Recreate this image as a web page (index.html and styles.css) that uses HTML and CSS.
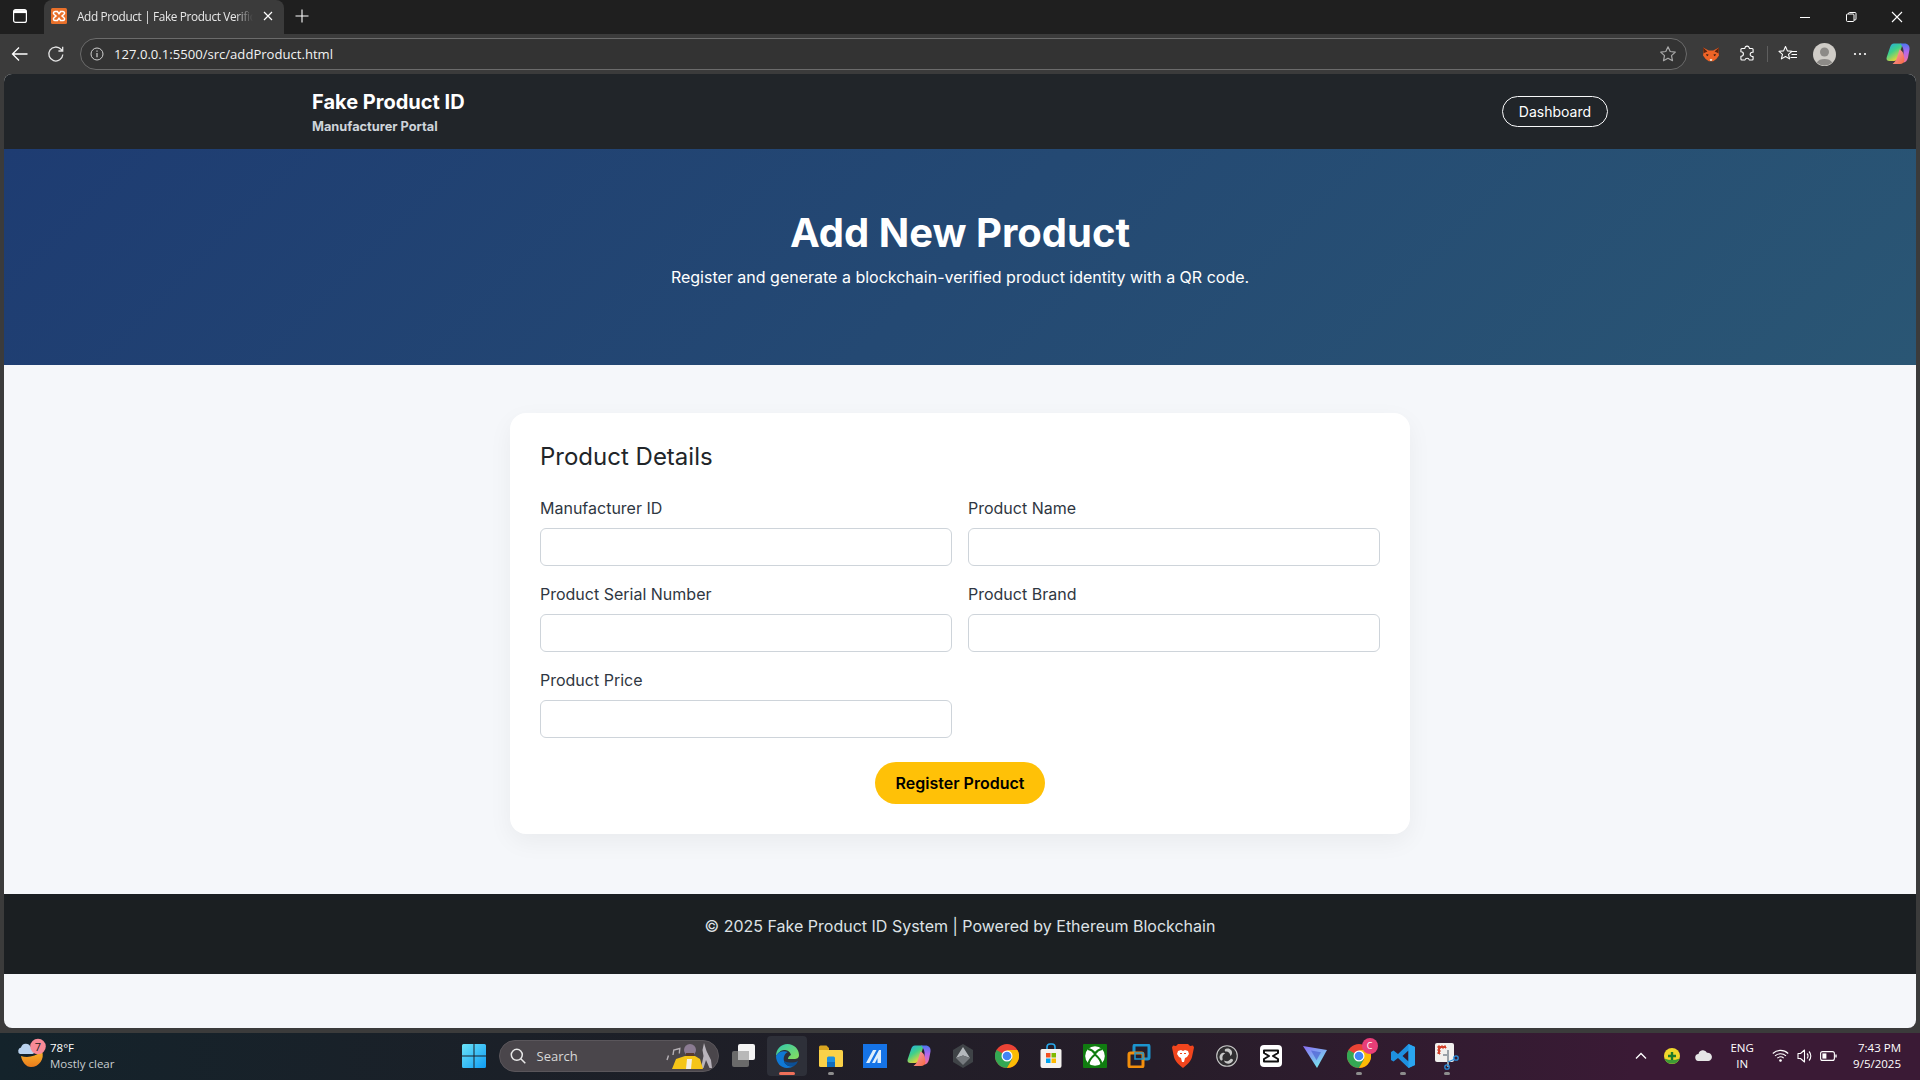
FILE: index.html
```html
<!DOCTYPE html>
<html lang="en">
<head>
    <meta charset="UTF-8">
    <meta name="viewport" content="width=device-width, initial-scale=1.0">
    <title>Add Product | Fake Product Verification</title>
    <link rel="stylesheet" href="styles.css">
</head>
<body>
    <!-- Browser tab strip -->
    <div class="tabstrip">
        <div class="strip-btn">
            <svg width="16" height="16" viewBox="0 0 16 16" fill="none" stroke="#fff" stroke-width="1.2"><rect x="1.6" y="1.6" width="12.8" height="12.8" rx="2"/><path d="M2 3.6h12" stroke-width="3"/></svg>
        </div>
        <div class="tab">
            <svg width="16" height="16" viewBox="0 0 16 16"><rect width="16" height="16" rx="1.5" fill="#e9702a"/><path d="M4 3.5h2.4L8 5.8l1.6-2.3H12a1.6 1.6 0 0 1 1 2.8L11 8l2 1.7a1.6 1.6 0 0 1-1 2.8H9.6L8 10.2 6.4 12.5H4a1.6 1.6 0 0 1-1-2.8L5 8 3 6.3a1.6 1.6 0 0 1 1-2.8z" fill="none" stroke="#fff" stroke-width="1.5"/></svg>
            <span class="tab-title">Add Product | Fake Product Verific</span>
            <svg class="tab-close" width="10" height="10" viewBox="0 0 10 10" stroke="#fff" stroke-width="1.2"><path d="M1 1l8 8M9 1l-8 8"/></svg>
        </div>
        <div class="strip-btn new-tab">
            <svg width="14" height="14" viewBox="0 0 14 14" stroke="#fff" stroke-width="1.1"><path d="M7 .5v13M.5 7h13"/></svg>
        </div>
        <div class="win-controls">
            <div class="win-btn"><svg width="12" height="12" viewBox="0 0 12 12" stroke="#fff"><path d="M1 6.5h10"/></svg></div>
            <div class="win-btn"><svg width="12" height="12" viewBox="0 0 12 12" fill="none" stroke="#fff"><rect x="1.5" y="3" width="7.5" height="7.5" rx="1"/><path d="M3.5 3v-.5a1 1 0 0 1 1-1H10a1 1 0 0 1 1 1V8a1 1 0 0 1-1 1H9"/></svg></div>
            <div class="win-btn"><svg width="12" height="12" viewBox="0 0 12 12" stroke="#fff" stroke-width="1.1"><path d="M1 1l10 10M11 1L1 11"/></svg></div>
        </div>
    </div>

    <!-- Browser toolbar -->
    <div class="toolbar">
        <div class="tool-btn first">
            <svg width="18" height="18" viewBox="0 0 18 18" fill="none" stroke="#fff" stroke-width="1.3"><path d="M16.5 9h-15M8 2.500L1.500 9 8 15.500"/></svg>
        </div>
        <div class="tool-btn">
            <svg width="18" height="18" viewBox="0 0 18 18" fill="none" stroke="#e6e6e6" stroke-width="1.3"><path d="M15.800 9.500a7 7 0 1 1-1.800-5.200L15.700 6M15.700 1.700V6h-4.300"/></svg>
        </div>
        <div class="address">
            <svg width="14" height="14" viewBox="0 0 14 14" fill="none" stroke="#d0d0d0"><circle cx="7" cy="7" r="6"/><path d="M7 6v4.200M7 3.600v1.200" stroke-width="1.2"/></svg>
            <span class="url">127.0.0.1:5500/src/addProduct.html</span>
            <svg class="star" width="18" height="18" viewBox="0 0 18 18" fill="none" stroke="#a8a8a8" stroke-width="1.2" stroke-linejoin="round"><path d="M9 1.800l2.200 4.700 5.100.6-3.800 3.500 1 5.100L9 13.200l-4.500 2.500 1-5.100-3.800-3.500 5.100-.6z"/></svg>
        </div>
        <div class="tool-group">
            <div class="tool-btn">
                <svg width="16" height="15" viewBox="0 0 18 16"><path d="M0 0l6.500 3.500h5L18 0l-.5 6 .5 3-3 4-3.500 2.500h-5L3 13 0 9l.5-3z" fill="#ee6326"/><path d="M0 0l5 4.500L.7 6.500zM18 0l-5 4.500 4.300 2z" fill="#5c2410"/><path d="M3.500 7.500l3 .8-2 1.800zM14.500 7.500l-3 .8 2 1.800z" fill="#2a1a12"/><path d="M7.500 13h3l-.7 2.300H8.200z" fill="#eadccf"/></svg>
            </div>
            <div class="tool-btn">
                <svg width="18" height="18" viewBox="0 0 18 18" fill="none" stroke="#fff" stroke-width="1.1" stroke-linejoin="round"><path d="M6.800 3.200a2.300 2.300 0 0 1 4.500-.4l.2.700h2.600a1 1 0 0 1 1 1v2.700h-.7a2.200 2.200 0 0 0 0 4.400h.7v2.400a1 1 0 0 1-1 1h-2.800a2.200 2.200 0 0 0-4.300 0H3.900a1 1 0 0 1-1-1v-2.800h.3a2.200 2.200 0 0 0 0-4.400h-.3V4.500a1 1 0 0 1 1-1h2.900z"/></svg>
            </div>
            <div class="tool-sep"></div>
            <div class="tool-btn">
                <svg width="20" height="18" viewBox="0 0 20 18" fill="none" stroke="#fff" stroke-width="1.1" stroke-linejoin="round"><path d="M7.500 1.500l1.900 4.400 4.600.4-3.500 3 1.100 4.600L7.500 11.500l-4.100 2.400 1.100-4.600-3.500-3 4.600-.4zM13 6.500h6M13.500 9.500h5.500M12.500 12.500h6.500"/></svg>
            </div>
            <div class="tool-btn">
                <svg width="23" height="23" viewBox="0 0 23 23"><circle cx="11.500" cy="11.500" r="11.500" fill="#cfccc7"/><circle cx="11.500" cy="9" r="4.500" fill="#8c8a87"/><path d="M3.800 19.500a8.500 6 0 0 1 15.400 0 11.500 11.500 0 0 1-15.400 0z" fill="#8c8a87"/></svg>
            </div>
            <div class="tool-btn">
                <svg width="14" height="4" viewBox="0 0 14 4" fill="#fff"><circle cx="2" cy="2" r="1.1"/><circle cx="7" cy="2" r="1.1"/><circle cx="12" cy="2" r="1.1"/></svg>
            </div>
            <div class="tool-btn last">
                <svg width="24" height="22" viewBox="0 0 24 22"><defs><linearGradient id="cpA" x1="0" y1="0" x2=".6" y2="1"><stop offset="0" stop-color="#22a8ee"/><stop offset=".5" stop-color="#3fd08a"/><stop offset="1" stop-color="#f7d52f"/></linearGradient><linearGradient id="cpB" x1=".5" y1="0" x2=".5" y2="1"><stop offset="0" stop-color="#4a78f2"/><stop offset=".45" stop-color="#b368ee"/><stop offset="1" stop-color="#f56f9a"/></linearGradient><linearGradient id="cpC" x1="0" y1="0" x2="1" y2="1"><stop offset="0" stop-color="#f3a0c0"/><stop offset="1" stop-color="#f86a3c"/></linearGradient></defs><path d="M8 .5h6.500c1.500 0 2 1 1.500 2.500L12 15c-.7 2-2 3-4 3H3.500C1 18 0 16.500.7 14.300L4 4.500C4.800 2 6 .5 8 .5z" fill="url(#cpA)"/><path d="M14 .5h4.500c3.500 0 5.500 2.500 5 6l-1.500 8c-.6 3-2.500 5-5 5h-4c3-2 4-6 4.500-9C18 7 17 3 14 .5z" fill="url(#cpB)"/><path d="M13.500 6.500l-2.800 9c-.7 2.300-2.300 4-4.200 5.500H14c2.500 0 4-1.500 4.500-4l-1-6c-.5-2-2-4-4-4.500z" fill="url(#cpC)"/></svg>
            </div>
        </div>
    </div>

    <!-- Page in the browser -->
    <div class="viewport">
        <nav class="topnav">
            <div class="nav-inner">
                <div class="brand">
                    <div class="brand-title">Fake Product ID</div>
                    <div class="brand-sub">Manufacturer Portal</div>
                </div>
                <a class="dash-btn">Dashboard</a>
            </div>
        </nav>

        <header class="hero">
            <h1>Add New Product</h1>
            <p>Register and generate a blockchain-verified product identity with a QR code.</p>
        </header>

        <main class="card">
            <h4>Product Details</h4>
            <form class="form-grid">
                <div class="field">
                    <label>Manufacturer ID</label>
                    <input type="text">
                </div>
                <div class="field">
                    <label>Product Name</label>
                    <input type="text">
                </div>
                <div class="field">
                    <label>Product Serial Number</label>
                    <input type="text">
                </div>
                <div class="field">
                    <label>Product Brand</label>
                    <input type="text">
                </div>
                <div class="field">
                    <label>Product Price</label>
                    <input type="text">
                </div>
                <div class="form-actions">
                    <button type="button">Register Product</button>
                </div>
            </form>
        </main>

        <footer class="footer">
            <p>© 2025 Fake Product ID System | Powered by Ethereum Blockchain</p>
        </footer>
    </div>

    <!-- Windows taskbar -->
    <div class="taskbar">
        <div class="weather">
            <svg width="30" height="36" viewBox="0 0 30 36">
                <defs><linearGradient id="moon" x1="0" y1="0" x2="0" y2="1"><stop offset="0" stop-color="#f9b52b"/><stop offset="1" stop-color="#ea7b1c"/></linearGradient></defs>
                <path d="M4 18c6 2 14 1 21-5 3 8-3 16-11 16-5 0-9-5-10-11z" fill="url(#moon)"/>
                <path d="M3 16a3.500 3.500 0 0 1 1-6.500 5 5 0 0 1 9.500-.5 3.500 3.500 0 0 1 2 7z" fill="#b9d2ee"/>
                <circle cx="21" cy="8.500" r="7.800" fill="#f98a97"/>
                <text x="21" y="12.500" class="weather-badge">7</text>
            </svg>
            <div class="weather-text">
                <span class="temp">78°F</span>
                <span class="cond">Mostly clear</span>
            </div>
        </div>

        <div class="task-icons">
            <div class="task-item">
                <svg width="24" height="24" viewBox="0 0 24 24"><defs><linearGradient id="winA" x1="0" y1="0" x2="1" y2="1"><stop offset="0" stop-color="#6be3f7"/><stop offset="1" stop-color="#0f9cf3"/></linearGradient></defs><path d="M0 1.500A1.500 1.500 0 0 1 1.500 0h10v11.500H0zM12.500 0h10A1.500 1.500 0 0 1 24 1.500v10H12.500zM0 12.500h11.500V24h-10A1.500 1.500 0 0 1 0 22.500zM12.500 12.500H24v10a1.500 1.500 0 0 1-1.500 1.500h-10z" fill="url(#winA)"/></svg>
            </div>
            <div class="search-pill">
                <svg width="16" height="16" viewBox="0 0 16 16" fill="none" stroke="#e8e8e8" stroke-width="1.5"><circle cx="6.800" cy="6.800" r="5.500"/><path d="M10.800 10.800l4.500 4.500"/></svg>
                <span>Search</span>
                <svg class="search-art" width="54" height="32" viewBox="0 0 54 32"><path d="M7 20l1.500-4.500M13 15l.8-5 6-1.500-.5 5" fill="none" stroke="#b5b0b5" stroke-width="1.4"/><path d="M44 3l2.500 8 4.500 9 1 8h-2.500l-3.500-8-2.500 8H41l2.500-12-1-6z" fill="#b9b4bc"/><path d="M12 29l4-10 9-3h10l5 3 3 10z" fill="#f5c518"/><circle cx="30" cy="10" r="6" fill="#8b7b92"/><path d="M26 13h8v3h-8z" fill="#5a3b2b"/><path d="M27 19h5l-1 10h-5z" fill="#f3efe6"/></svg>
            </div>
            <div class="task-item"><svg width="24" height="24" viewBox="0 0 24 24"><rect x="1" y="7" width="17" height="16" rx="2" fill="#6a6a6a"/><rect x="7" y="0" width="17" height="16" rx="2" fill="#f4f4f4"/><rect x="7" y="7" width="11" height="9" fill="#b8b8b8"/></svg></div>
            <div class="task-item active">
                <svg width="24" height="24" viewBox="0 0 24 24"><defs><linearGradient id="edgeA" x1="0" y1="0" x2="1" y2="1"><stop offset="0" stop-color="#2fc8b0"/><stop offset="1" stop-color="#8ade5a"/></linearGradient></defs><path d="M1 12C1 5 6 0 12.500 0 19 0 24 5 24 11c0 3-2 4-5 4h-6c0-2 1-3 3-4-1-4-4-5-7-5-3 0-6 3-8 6z" fill="url(#edgeA)"/><path d="M1 12c0 7 5 12 11 12 3 0 5-1 7-2-5 1-9-1-10-5-1-4 1-8 4-9-5-2-10 0-12 4z" fill="#0f78d4"/><path d="M9 17c1 4 5 6 10 5 2-1 3-3 4-5-4 2-9 2-14 0z" fill="#0b4f96"/></svg>
                <i class="indicator orange"></i>
            </div>
            <div class="task-item">
                <svg width="24" height="24" viewBox="0 0 24 24"><path d="M0 3a1.500 1.500 0 0 1 1.500-1.500h6L10 4v3H0z" fill="#d9a520"/><path d="M0 6h22.500A1.500 1.500 0 0 1 24 7.500v14a1.500 1.500 0 0 1-1.500 1.500h-21A1.500 1.500 0 0 1 0 21.500z" fill="#fad148"/><path d="M8 14a1.500 1.500 0 0 1 1.500-1.500h5A1.500 1.500 0 0 1 16 14v9H8z" fill="#1c8fe0"/><path d="M8 18h8v5H8z" fill="#0f6cbd"/></svg>
                <i class="indicator"></i>
            </div>
            <div class="task-item"><svg width="24" height="24" viewBox="0 0 24 24"><rect width="24" height="24" fill="#1573e6"/><path d="M3 19L10 6h3.500L6.500 19zM9 19l7-13h2v13h-3.500v-5L12 19z" fill="#dfeefb"/></svg></div>
            <div class="task-item">
                <svg width="24" height="22" viewBox="0 0 24 22"><path d="M8 .5h6.500c1.500 0 2 1 1.500 2.500L12 15c-.7 2-2 3-4 3H3.500C1 18 0 16.500.7 14.300L4 4.500C4.800 2 6 .5 8 .5z" fill="url(#cpA)"/><path d="M14 .5h4.500c3.500 0 5.500 2.500 5 6l-1.500 8c-.6 3-2.500 5-5 5h-4c3-2 4-6 4.500-9C18 7 17 3 14 .5z" fill="url(#cpB)"/><path d="M13.500 6.500l-2.800 9c-.7 2.300-2.300 4-4.200 5.500H14c2.500 0 4-1.500 4.500-4l-1-6c-.5-2-2-4-4-4.500z" fill="url(#cpC)"/></svg>
            </div>
            <div class="task-item"><svg width="22" height="24" viewBox="0 0 22 24"><path d="M11 0l10 6v12l-10 6L1 18V6z" fill="#3f4347"/><path d="M11 3l7 11-7-2.500L4 14z" fill="#b4b8bc"/><path d="M4 14l7-2.500 7 2.500-7 7z" fill="#767a7e"/></svg></div>
            <div class="task-item">
                <svg width="24" height="24" viewBox="0 0 24 24"><circle cx="12" cy="12" r="12" fill="#ea4335"/><path d="M12 12L1.600 6A12 12 0 0 0 12 24l5.200-9z" fill="#34a853"/><path d="M12 6h10.400A12 12 0 0 1 12 24l5.200-9z" fill="#fbbc05"/><circle cx="12" cy="12" r="5.500" fill="#fff"/><circle cx="12" cy="12" r="4.300" fill="#4285f4"/></svg>
            </div>
            <div class="task-item">
                <svg width="24" height="26" viewBox="0 0 24 26"><path d="M8 6V4a3 3 0 0 1 3-3h2a3 3 0 0 1 3 3v2" fill="none" stroke="#28a8ea" stroke-width="1.6"/><path d="M3 6h18a1.500 1.500 0 0 1 1.500 1.500V23a2 2 0 0 1-2 2h-17a2 2 0 0 1-2-2V7.500A1.500 1.500 0 0 1 3 6z" fill="#f4f2f0"/><rect x="7" y="10" width="4.500" height="4.500" fill="#f25022"/><rect x="12.500" y="10" width="4.500" height="4.500" fill="#7fba00"/><rect x="7" y="15.500" width="4.500" height="4.500" fill="#00a4ef"/><rect x="12.500" y="15.500" width="4.500" height="4.500" fill="#ffb900"/></svg>
            </div>
            <div class="task-item"><svg width="24" height="24" viewBox="0 0 24 24"><rect width="24" height="24" rx="1" fill="#107c10"/><circle cx="12" cy="12" r="9.800" fill="#fff"/><path d="M5 5c3 .5 5.500 2.500 7 4.500C13.500 7.500 16 5.500 19 5M5.500 20c.5-3.500 3.500-7 6.500-9.500 3 2.500 6 6 6.500 9.500" fill="none" stroke="#107c10" stroke-width="2.200"/></svg></div>
            <div class="task-item"><svg width="24" height="24" viewBox="0 0 24 24" fill="none"><path d="M7 8V2.500A1.500 1.500 0 0 1 8.500 1h12A1.500 1.500 0 0 1 22 2.500v11a1.500 1.500 0 0 1-1.500 1.500H16" stroke="#1c95cf" stroke-width="3"/><rect x="2" y="9" width="14" height="14" rx="1.500" stroke="#f28e0c" stroke-width="3"/><path d="M8 15V9h8v6H8z" stroke="#1c95cf" stroke-width="1.500"/></svg></div>
            <div class="task-item"><svg width="22" height="24" viewBox="0 0 22 24"><path d="M6 0h10l2 2 3-.5 1 2L20 13c-1 4-5 8-9 11-4-3-8-7-9-11L0 3.500l1-2L4 2z" fill="#f1451d"/><path d="M6 7l3-1 2 1 2-1 3 1 1 3-2 3-2 1-1 4h-2l-1-4-2-1-2-3z" fill="#fff"/><path d="M8 9.500h2M12 9.500h2" stroke="#f1451d" stroke-width="1.200"/></svg></div>
            <div class="task-item"><svg width="22" height="22" viewBox="0 0 22 22"><circle cx="11" cy="11" r="10.300" fill="#302e31" stroke="#c8c8c8" stroke-width="1.100"/><path d="M11 3.500c3-.5 5.500 2 5 5-.2 1.200-1 2-1.800 2.500.2-2.500-1.700-4.500-4.400-4.500-1.200 0-1.800-2.700 1.200-3zM4.500 15c-1.800-2.300-1-5.800 1.800-7 1-.5 2.200-.3 3 .3-2.200.8-3.500 3.300-2.700 5.700.4 1.200-1.200 2.200-2.100 1zM17 15.500c-1 2.700-4.500 4-7.200 2.500-1-.5-1.500-1.500-1.700-2.500 2 1.300 4.800.8 6.300-1.300.7-1 2.900 0 2.600 1.300z" fill="#c8c8c8"/></svg></div>
            <div class="task-item"><svg width="22" height="22" viewBox="0 0 22 22"><rect width="22" height="22" rx="4" fill="#fff"/><path d="M4 5.500h14V8l-5 3 5 3v2.500H4V14l5-3-5-3z" fill="none" stroke="#111" stroke-width="2" stroke-linejoin="round"/></svg></div>
            <div class="task-item"><svg width="24" height="24" viewBox="0 0 24 24"><defs><linearGradient id="prot" x1="0" y1="0" x2=".6" y2="1"><stop offset="0" stop-color="#8a6cf5"/><stop offset="1" stop-color="#78e4ee"/></linearGradient></defs><path d="M0 2l24 4-10 18z" fill="url(#prot)"/><path d="M8 6.500l10 1.800-4.500 8z" fill="#4a5fd0" opacity=".65"/></svg></div>
            <div class="task-item">
                <svg width="24" height="24" viewBox="0 0 24 24"><circle cx="12" cy="12" r="12" fill="#ea4335"/><path d="M12 12L1.600 6A12 12 0 0 0 12 24l5.200-9z" fill="#34a853"/><path d="M12 6h10.400A12 12 0 0 1 12 24l5.200-9z" fill="#fbbc05"/><circle cx="12" cy="12" r="5.500" fill="#fff"/><circle cx="12" cy="12" r="4.300" fill="#4285f4"/></svg>
                <span class="chrome-badge">C</span>
                <i class="indicator"></i>
            </div>
            <div class="task-item">
                <svg width="24" height="24" viewBox="0 0 24 24"><path d="M17.500 0L24 3v18l-6.500 3L7 14l-4.500 3.500L0 16V8l2.500-1.500L7 10zM17.500 6.500L11.500 12l6 5.500z" fill="#1e90e0"/><path d="M17.500 0L24 3v18l-6.500 3z" fill="#2aa5f0"/></svg>
                <i class="indicator"></i>
            </div>
            <div class="task-item">
                <svg width="26" height="28" viewBox="0 0 26 28"><rect x="1" y="1" width="19" height="19" rx="2" fill="#f1f0ee"/><path d="M4 4h8v2H6v6H4z" fill="#d3402b" stroke="#d3402b" stroke-dasharray="2 1"/><path d="M14 8v17M9 13h6" stroke="#9aa2a8" stroke-width="2"/><circle cx="22" cy="16" r="2.200" fill="none" stroke="#2a8fdc" stroke-width="1.3"/><circle cx="13" cy="25" r="2.200" fill="none" stroke="#2a8fdc" stroke-width="1.3"/><path d="M14 20l7-3" stroke="#2a8fdc" stroke-width="1.3"/></svg>
                <i class="indicator"></i>
            </div>
        </div>

        <div class="tray">
            <svg class="tray-chevron" width="12" height="8" viewBox="0 0 12 8" fill="none" stroke="#fff" stroke-width="1.3"><path d="M1 6.500l5-5 5 5"/></svg>
            <svg class="tray-app" width="16" height="16" viewBox="0 0 16 16"><circle cx="8" cy="8" r="8" fill="#f1d72c"/><path d="M.5 10.500a8 8 0 0 0 15 0 12 6 0 0 1-15 0z" fill="#3d9b35"/><path d="M8 4v8M4 8h8" stroke="#1d7a2a" stroke-width="2.4"/></svg>
            <svg width="17" height="11" viewBox="0 0 17 11"><path d="M4 11a3.500 3.500 0 0 1-.5-7A4.500 4.500 0 0 1 12 2.800 4 4 0 0 1 13.500 11z" fill="#e6e6e6"/></svg>
            <div class="lang"><span>ENG</span><span>IN</span></div>
            <div class="tray-status">
                <svg width="17" height="13" viewBox="0 0 17 13" fill="none" stroke="#fff" stroke-width="1.1"><path d="M.8 4.500a11 11 0 0 1 15.400 0M3 6.900a8 8 0 0 1 11 0M5.300 9.200a4.600 4.600 0 0 1 6.400 0"/><circle cx="8.500" cy="11.500" r=".8" fill="#fff"/></svg>
                <svg width="15" height="14" viewBox="0 0 15 14" fill="none" stroke="#fff" stroke-width="1.1" stroke-linejoin="round"><path d="M1 4.500h2.500L7.500 1v12L3.500 9.500H1zM10 4.500a3.500 3.500 0 0 1 0 5M12 2.500a6.500 6.500 0 0 1 0 9"/></svg>
                <svg width="17" height="10" viewBox="0 0 17 10" fill="none" stroke="#fff" stroke-width="1.1"><rect x=".6" y=".6" width="13.800" height="8.800" rx="2"/><rect x="2.400" y="2.400" width="4" height="5.200" fill="#fff" stroke="none"/><path d="M16 3.500v3" stroke-width="1.4"/></svg>
            </div>
            <div class="clock"><span>7:43 PM</span><span>9/5/2025</span></div>
        </div>
    </div>
</body>
</html>
```

FILE: styles.css
```css
* {
    box-sizing: border-box;
}

body {
    margin: 0;
    height: 100vh;
    overflow: hidden;
    display: flex;
    flex-direction: column;
    background-color: #3b3b3b;
    font-family: "Open Sans", sans-serif;
    color: #fff;
}

/* Browser chrome */
.tabstrip {
    height: 34px;
    flex-shrink: 0;
    display: flex;
    align-items: stretch;
    background-color: #1f1f1f;
}

.strip-btn {
    width: 40px;
    padding-bottom: 2px;
    display: flex;
    align-items: center;
    justify-content: center;
}

.tab {
    width: 240px;
    margin-left: 4px;
    padding: 0 11px 2px 7px;
    display: flex;
    align-items: center;
    gap: 10px;
    background-color: #3b3b3b;
    border-radius: 8px 8px 0 0;
}

.tab svg {
    flex-shrink: 0;
}

.tab-title {
    flex: 1;
    min-width: 0;
    white-space: nowrap;
    font-size: 11.8px;
    letter-spacing: -0.35px;
    color: #e8e8e8;
    -webkit-mask-image: linear-gradient(90deg, #000 90%, transparent 100%);
    mask-image: linear-gradient(90deg, #000 90%, transparent 100%);
}

.new-tab {
    width: 36px;
}

.win-controls {
    margin-left: auto;
    display: flex;
}

.win-btn {
    width: 46px;
    display: flex;
    align-items: center;
    justify-content: center;
}

.toolbar {
    height: 40px;
    flex-shrink: 0;
    display: flex;
    align-items: center;
    background-color: #3b3b3b;
}

.tool-btn {
    width: 36px;
    height: 32px;
    display: flex;
    align-items: center;
    justify-content: center;
}

.tool-btn.first {
    margin-left: 2px;
}

.tool-btn.last {
    margin-left: 2px;
    margin-right: 4px;
}

.address {
    flex: 1;
    height: 32px;
    margin-left: 6px;
    padding: 0 9px;
    display: flex;
    align-items: center;
    gap: 10px;
    background-color: #333;
    border: 1px solid #6b6b6b;
    border-radius: 16px;
}

.url {
    flex: 1;
    font-size: 13.1px;
    color: #f2f2f2;
}

.tool-group {
    margin-left: 6px;
    display: flex;
    align-items: center;
}

.tool-sep {
    width: 1px;
    height: 16px;
    margin: 0 2px;
    background-color: #5e5e5e;
}

/* Page */
.viewport {
    flex: 1;
    margin: 0 4px 5px;
    overflow: hidden;
    background-color: #f5f7fa;
    border-radius: 8px;
    font-family: Inter, sans-serif;
}

.topnav {
    padding: 13px 12px;
    background-color: #212529;
}

.nav-inner {
    max-width: 1296px;
    margin: 0 auto;
    display: flex;
    align-items: center;
    justify-content: space-between;
}

.brand-title {
    font-size: 20px;
    line-height: 30px;
    font-weight: 700;
}

.brand-sub {
    font-size: 12.8px;
    line-height: 19px;
    font-weight: 700;
    color: #ced4da;
}

.dash-btn {
    padding: 4px 16px;
    font-size: 14px;
    line-height: 21px;
    color: #fff;
    border: 1px solid #f8f9fa;
    border-radius: 50rem;
}

.hero {
    padding: 60px 12px;
    text-align: center;
    background: linear-gradient(135deg, #1e3c72, #2a5674);
}

.hero h1 {
    margin: 0 0 8px;
    font-size: 40px;
    line-height: 48px;
    font-weight: 700;
}

.hero p {
    margin: 0 0 16px;
    font-size: 16px;
    line-height: 24px;
}

.card {
    width: 900px;
    margin: 48px auto 60px;
    padding: 30px;
    background-color: #fff;
    border-radius: 16px;
    box-shadow: 0 8px 24px rgba(0, 0, 0, 0.05);
    color: #212529;
}

.card h4 {
    margin: 0 0 25px;
    font-size: 24px;
    line-height: 28px;
    font-weight: 400;
}

.form-grid {
    display: grid;
    grid-template-columns: 1fr 1fr;
    column-gap: 16px;
    row-gap: 16px;
}

.field label {
    display: block;
    margin-bottom: 8px;
    font-size: 16px;
    line-height: 24px;
    color: #2f3742;
}

.field input {
    display: block;
    width: 100%;
    height: 38px;
    background-color: #fff;
    border: 1px solid #ced4da;
    border-radius: 6px;
}

.form-actions {
    grid-column: 1 / -1;
    margin-top: 8px;
    text-align: center;
}

.form-actions button {
    height: 42px;
    width: 170px;
    padding: 0;
    font-family: Inter, sans-serif;
    font-size: 16px;
    font-weight: 600;
    color: #000;
    background-color: #ffc107;
    border: none;
    border-radius: 25px;
}

.footer {
    padding: 20px 12px;
    text-align: center;
    background-color: #1b1f22;
    color: #dee2e6;
}

.footer p {
    margin: 0 0 16px;
    font-size: 16px;
    line-height: 24px;
}

/* Taskbar */
.taskbar {
    height: 47px;
    flex-shrink: 0;
    padding-bottom: 2px;
    display: grid;
    grid-template-columns: 1fr auto 1fr;
    align-items: center;
    background: linear-gradient(90deg, #14232b 0%, #1d1f27 35%, #261d29 60%, #3a1a35 85%, #3a1a35 100%);
}

.weather {
    padding-left: 17px;
    display: flex;
    align-items: center;
    gap: 3px;
}

.weather-badge {
    font-family: "Open Sans", sans-serif;
    font-size: 11px;
    fill: #222;
    text-anchor: middle;
}

.weather-text {
    display: flex;
    flex-direction: column;
    font-size: 11.5px;
    line-height: 16px;
}

.cond {
    color: #c8cdd0;
}

.task-icons {
    display: flex;
    align-items: center;
}

.task-item {
    position: relative;
    width: 44px;
    height: 40px;
    display: flex;
    align-items: center;
    justify-content: center;
}

.task-item.active {
    width: 40px;
    margin: 0 2px;
    background-color: #2e3039;
    border-radius: 4px;
}

.indicator {
    position: absolute;
    left: 50%;
    bottom: 1px;
    width: 6px;
    height: 3px;
    margin-left: -3px;
    background-color: #8d8d8d;
    border-radius: 2px;
}

.indicator.orange {
    width: 16px;
    margin-left: -8px;
    background-color: #f0705a;
}

.chrome-badge {
    position: absolute;
    top: 2px;
    right: 3px;
    width: 16px;
    height: 16px;
    font-size: 9px;
    line-height: 16px;
    text-align: center;
    background-color: #e83e78;
    border-radius: 50%;
}

.search-pill {
    width: 220px;
    height: 32px;
    margin: 0 2px 0 3px;
    padding: 0 4px 0 10px;
    display: flex;
    align-items: center;
    gap: 11px;
    font-size: 13px;
    color: #d8d8d8;
    background-color: #4a464b;
    border: 1px solid #5a565b;
    border-radius: 16px;
}

.search-art {
    margin-left: auto;
}

.tray {
    display: flex;
    align-items: center;
    justify-content: flex-end;
    padding-right: 19px;
}

.tray-chevron {
    margin-right: 17px;
}

.tray-app {
    margin-right: 15px;
}

.lang {
    width: 40px;
    margin-left: 10px;
    display: flex;
    flex-direction: column;
    align-items: center;
    font-size: 11.5px;
    line-height: 16px;
}

.tray-status {
    margin-left: 10px;
    display: flex;
    align-items: center;
    gap: 8px;
}

.clock {
    margin-left: 16px;
    display: flex;
    flex-direction: column;
    align-items: flex-end;
    font-size: 11.5px;
    line-height: 16px;
}
```
